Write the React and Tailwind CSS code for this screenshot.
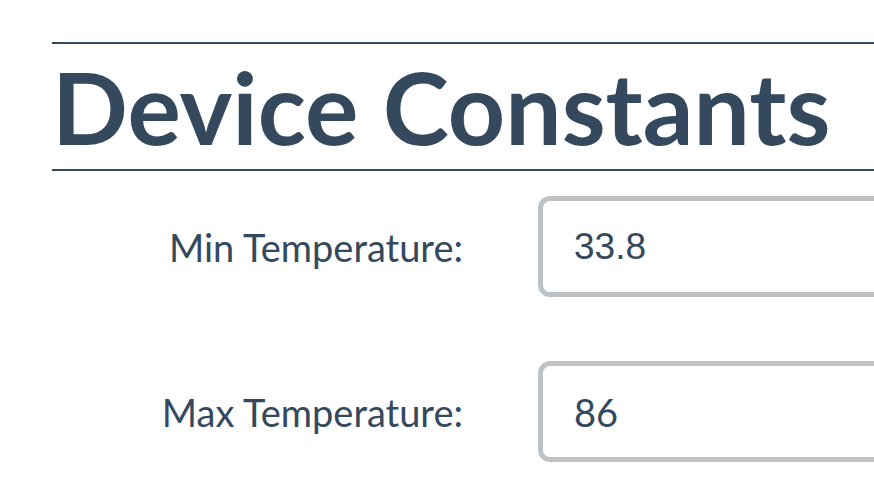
export default function App() {
  const rows = [
    { label: 'Min Temperature:', value: '33.8', font: "font-['Liberation_Sans',Arial,sans-serif] text-[37px]" },
    { label: 'Max Temperature:', value: '86', font: "font-['Lato',sans-serif] text-[38px]" },
  ];

  return (
    <div className="w-[874px] h-[494px] overflow-hidden bg-white text-[#34495e] font-['Lato',sans-serif]">
      <div className="pl-[52px] pt-[42px] w-[1100px]">
        {/* Header */}
        <div className="border-t-2 border-b-2 border-[#34495e]">
          <h1 className="text-[100px] font-bold leading-[125px]">Device Constants</h1>
        </div>

        {/* Fields */}
        <div className="mt-[25px] flex flex-col gap-[64px]">
          {rows.map((row) => (
            <div key={row.label} className="flex items-center">
              <label className="w-[411px] text-right text-[38px] leading-none">{row.label}</label>
              <input
                type="text"
                defaultValue={row.value}
                className={`ml-[75px] w-[500px] h-[101px] rounded-[12px] border-[5px] border-[#bdc3c7] pl-[31px] pr-[30px] text-[#34495e] outline-none ${row.font}`}
              />
            </div>
          ))}
        </div>
      </div>
    </div>
  );
}
